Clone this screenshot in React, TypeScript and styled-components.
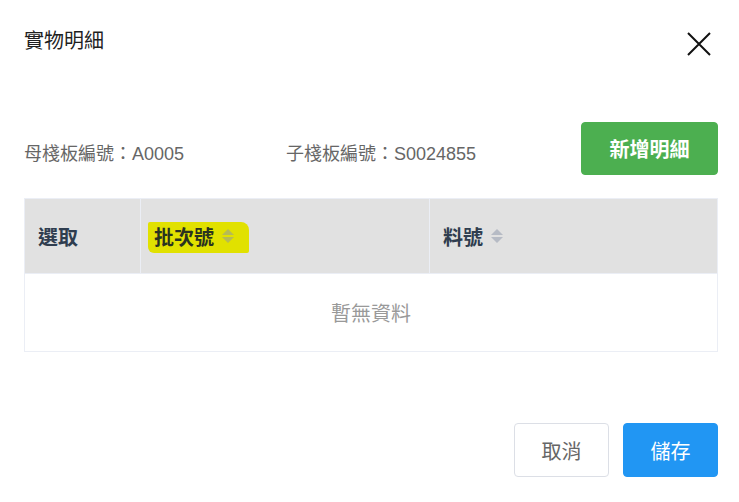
import styled, { createGlobalStyle } from "styled-components";

const GlobalStyle = createGlobalStyle`
  html, body {
    margin: 0;
    padding: 0;
    background: #ffffff;
  }
  body {
    font-family: "Liberation Sans", "Noto Sans CJK TC", sans-serif;
  }
  * {
    box-sizing: border-box;
  }
`;

const Dialog = styled.div`
  width: 739px;
  height: 502px;
  display: flex;
  flex-direction: column;
  padding: 0 21px 0 24px;
  background: #fff;
`;

const Header = styled.div`
  display: flex;
  justify-content: space-between;
  align-items: flex-start;
  padding-top: 30px;
  height: 122px;
`;

const Title = styled.h2`
  margin: 0;
  font-size: 20px;
  line-height: 22px;
  font-weight: 400;
  color: #1f1f1f;
`;

const CloseButton = styled.button`
  border: none;
  background: none;
  padding: 0;
  margin: 2px 7px 0 0;
  width: 24px;
  height: 24px;
  cursor: pointer;
  display: flex;
`;

const InfoRow = styled.div`
  display: flex;
  align-items: center;
  height: 53px;
`;

const InfoItem = styled.span`
  width: 262px;
  font-size: 18px;
  color: #666;
  padding-top: 6px;
`;

type BtnProps = { $bg: string; $color: string; $border?: string; $bold?: boolean };

const Button = styled.button<BtnProps>`
  height: 54px;
  width: 95px;
  padding: 0;
  border-radius: 4px;
  border: 1px solid ${({ $border, $bg }) => $border || $bg};
  background: ${({ $bg }) => $bg};
  color: ${({ $color }) => $color};
  font-family: "Liberation Sans", "Noto Sans CJK TC", sans-serif;
  font-size: 20px;
  font-weight: ${({ $bold }) => ($bold ? 700 : 400)};
  cursor: pointer;
`;

const AddButton = styled(Button)`
  margin-left: auto;
  width: 137px;
  height: 53px;
`;

const Table = styled.div`
  margin-top: 23px;
  border: 1px solid #ebeef5;
  display: flex;
  flex-direction: column;
`;

const HeadRow = styled.div`
  display: grid;
  grid-template-columns: 116px 289px 1fr;
  height: 75px;
  background: #e1e1e1;
  border-bottom: 1px solid #ebeef5;
`;

const HeadCell = styled.div`
  display: flex;
  align-items: center;
  padding-left: 13px;
  border-right: 1px solid #ebeef5;
  font-size: 20px;
  font-weight: 700;
  color: #2f3d4f;
  &:last-child {
    border-right: none;
  }
`;

const Highlight = styled.span`
  display: inline-flex;
  align-items: center;
  background: #e1e100;
  margin-left: -6px;
  margin-top: 3px;
  padding: 0 15px 3px 6px;
  height: 31px;
  border-radius: 2px 8px 2px 6px;
  color: #2a3320;
`;

const Sort = styled.span`
  display: inline-flex;
  flex-direction: column;
  gap: 2px;
  margin-left: 8px;
`;

const Caret = styled.span<{ $down?: boolean }>`
  width: 0;
  height: 0;
  border-left: 6px solid transparent;
  border-right: 6px solid transparent;
  ${({ $down }) =>
    $down
      ? "border-top: 6px solid rgba(140,150,170,0.5);"
      : "border-bottom: 6px solid rgba(140,150,170,0.5);"}
`;

const EmptyRow = styled.div`
  height: 77px;
  display: flex;
  align-items: center;
  justify-content: center;
  font-size: 20px;
  color: #999;
`;

const Footer = styled.div`
  margin-top: auto;
  margin-bottom: 25px;
  display: flex;
  justify-content: flex-end;
  gap: 14px;
`;

function SortIcon() {
  return (
    <Sort>
      <Caret />
      <Caret $down />
    </Sort>
  );
}

export default function App() {
  return (
    <>
      <GlobalStyle />
      <Dialog>
        <Header>
          <Title>實物明細</Title>
          <CloseButton aria-label="close">
            <svg width="24" height="24" viewBox="0 0 24 24">
              <path d="M1 1 L23 23 M23 1 L1 23" stroke="#111" strokeWidth="2" fill="none" />
            </svg>
          </CloseButton>
        </Header>
        <InfoRow>
          <InfoItem>母棧板編號：A0005</InfoItem>
          <InfoItem>子棧板編號：S0024855</InfoItem>
          <AddButton $bg="#4caf50" $color="#fff" $bold>
            新增明細
          </AddButton>
        </InfoRow>
        <Table>
          <HeadRow>
            <HeadCell>選取</HeadCell>
            <HeadCell>
              <Highlight>
                批次號
                <SortIcon />
              </Highlight>
            </HeadCell>
            <HeadCell>
              料號
              <SortIcon />
            </HeadCell>
          </HeadRow>
          <EmptyRow>暫無資料</EmptyRow>
        </Table>
        <Footer>
          <Button $bg="#fff" $color="#666" $border="#dcdfe6">
            取消
          </Button>
          <Button $bg="#2196f3" $color="#fff">
            儲存
          </Button>
        </Footer>
      </Dialog>
    </>
  );
}
